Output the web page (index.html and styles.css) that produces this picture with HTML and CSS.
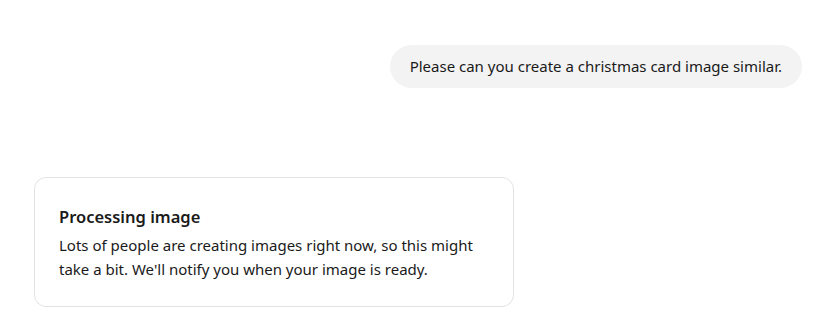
FILE: index.html
```html
<!DOCTYPE html>
<html lang="en">
<head>
  <meta charset="UTF-8" />
  <meta name="viewport" content="width=device-width, initial-scale=1.0"/>
  <title>Chat</title>
  <link rel="stylesheet" href="styles.css">
</head>
<body>
  <div class="chat">
    <div class="row-user">
      <div class="bubble">Please can you create a christmas card image similar.</div>
    </div>

    <div class="status-card">
      <h2>Processing image</h2>
      <p>Lots of people are creating images right now, so this might take a bit. We'll notify you when your image is ready.</p>
    </div>
  </div>
</body>
</html>
```

FILE: styles.css
```css
body {
  margin: 0;
  font-family: 'Noto Sans', sans-serif;
  background: #ffffff;
  color: #1a1a1a;
}

.chat {
  padding: 45px 32px 0 34px;
}

.row-user {
  display: flex;
  justify-content: flex-end;
}

.bubble {
  background-color: #f3f3f3;
  border-radius: 22px;
  padding: 11px 20px;
  font-size: 15px;
  line-height: 21px;
}

.status-card {
  margin-top: 89px;
  width: 480px;
  box-sizing: border-box;
  border: 1px solid #e3e3e3;
  border-radius: 12px;
  padding: 28px 24px 25px;
}

.status-card h2 {
  margin: 0 0 5px;
  font-size: 16.5px;
  font-weight: 600;
  line-height: 22px;
}

.status-card p {
  margin: 0;
  font-size: 15px;
  line-height: 24px;
}
```
